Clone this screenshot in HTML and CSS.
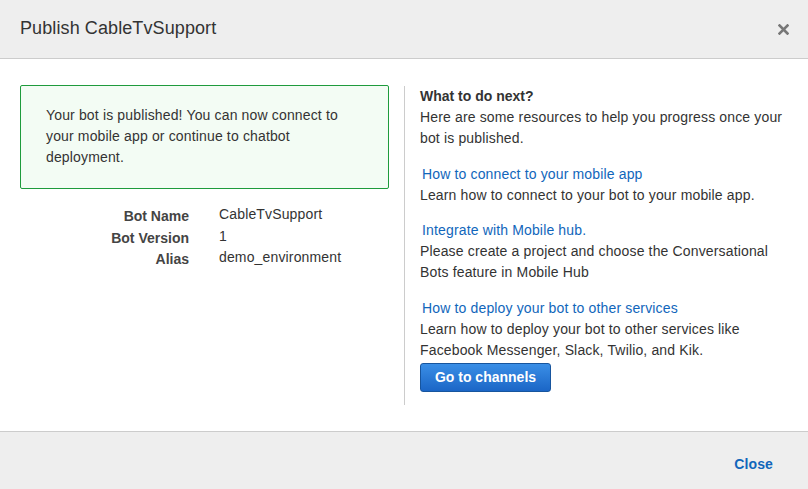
FILE: index.html
```html
<!DOCTYPE html>
<html>
<head>
<meta charset="utf-8">
<link rel="stylesheet" href="styles.css">
</head>
<body>
<div class="dialog">
  <div class="header">
    <h1 class="title">Publish CableTvSupport</h1>
    <button class="x-btn" aria-label="Close">
      <svg width="11" height="11" viewBox="0 0 11 11"><path d="M1.5 1.5 L9.5 9.5 M9.5 1.5 L1.5 9.5" stroke="#777" stroke-width="2.6" stroke-linecap="square"/></svg>
    </button>
  </div>
  <div class="content">
    <div class="left">
      <div class="alert">Your bot is published! You can now connect to your mobile app or continue to chatbot deployment.</div>
      <div class="details">
        <div class="label">Bot Name</div><div class="value">CableTvSupport</div>
        <div class="label">Bot Version</div><div class="value">1</div>
        <div class="label">Alias</div><div class="value">demo_environment</div>
      </div>
    </div>
    <div class="right">
      <div class="intro">
        <div class="heading">What to do next?</div>
        <div>Here are some resources to help you progress once your bot is published.</div>
      </div>
      <div class="section">
        <a class="link" href="#">How to connect to your mobile app</a>
        <div>Learn how to connect to your bot to your mobile app.</div>
      </div>
      <div class="section">
        <a class="link" href="#">Integrate with Mobile hub.</a>
        <div>Please create a project and choose the Conversational Bots feature in Mobile Hub</div>
      </div>
      <div class="section">
        <a class="link" href="#">How to deploy your bot to other services</a>
        <div>Learn how to deploy your bot to other services like Facebook Messenger, Slack, Twilio, and Kik.</div>
        <button class="primary">Go to channels</button>
      </div>
    </div>
  </div>
  <div class="footer">
    <a class="close-link" href="#">Close</a>
  </div>
</div>
</body>
</html>
```
FILE: styles.css
```css
* { box-sizing: border-box; }
html, body { margin: 0; padding: 0; background: #fff; }
body {
  font-family: "Liberation Sans", Arial, sans-serif;
  font-size: 14px;
  letter-spacing: 0.15px;
  color: #333;
}
.dialog { width: 808px; height: 489px; display: flex; flex-direction: column; }
.header {
  height: 59px;
  background: #eeeeee;
  border-bottom: 1px solid #cccccc;
  display: flex;
  align-items: center;
  justify-content: space-between;
  padding: 0 19px 0 20px;
}
.title { margin: 0; font-size: 18px; font-weight: normal; color: #333; padding-bottom: 2px; letter-spacing: 0.1px; }
.x-btn { border: 0; background: none; padding: 0; width: 11px; height: 11px; display: flex; }
.content {
  flex: 1;
  display: flex;
  padding: 27px 0 26px 20px;
}
.left { width: 384px; padding-right: 15px; }
.alert {
  border: 1px solid #1e9b3c;
  background: #f3fcf4;
  border-radius: 2px;
  padding: 19px 40px 20px 25px;
  line-height: 21px;
  color: #333;
  margin-top: -1px;
}
.details {
  display: grid;
  grid-template-columns: 169px 1fr;
  column-gap: 30px;
  margin-top: 17px;
  line-height: 21.5px;
}
.label { text-align: right; font-weight: bold; color: #444; letter-spacing: 0; }
.value { color: #333; margin-top: -2px; }
.right {
  border-left: 1px solid #cccccc;
  padding: 0 21px 0 15px;
  width: 404px;
  line-height: 21px;
}
.heading { font-weight: bold; letter-spacing: 0; }
.section { margin-top: 14.5px; }
.link { color: #1166bb; text-decoration: none; display: block; margin-left: 2px; }
.primary {
  margin-top: 2px;
  height: 29px;
  width: 131px;
  border: 1px solid #17559e;
  border-radius: 3px;
  background: linear-gradient(#3a8ee6, #1b66c6);
  color: #fff;
  font-family: "Liberation Sans", Arial, sans-serif;
  font-weight: bold;
  font-size: 14px;
  padding: 0;
  display: block;
}
.footer {
  height: 58px;
  background: #eeeeee;
  border-top: 1px solid #cccccc;
  display: flex;
  align-items: center;
  justify-content: flex-end;
  padding: 6px 35px 0 0;
}
.close-link { color: #1166bb; font-weight: bold; text-decoration: none; }
```
